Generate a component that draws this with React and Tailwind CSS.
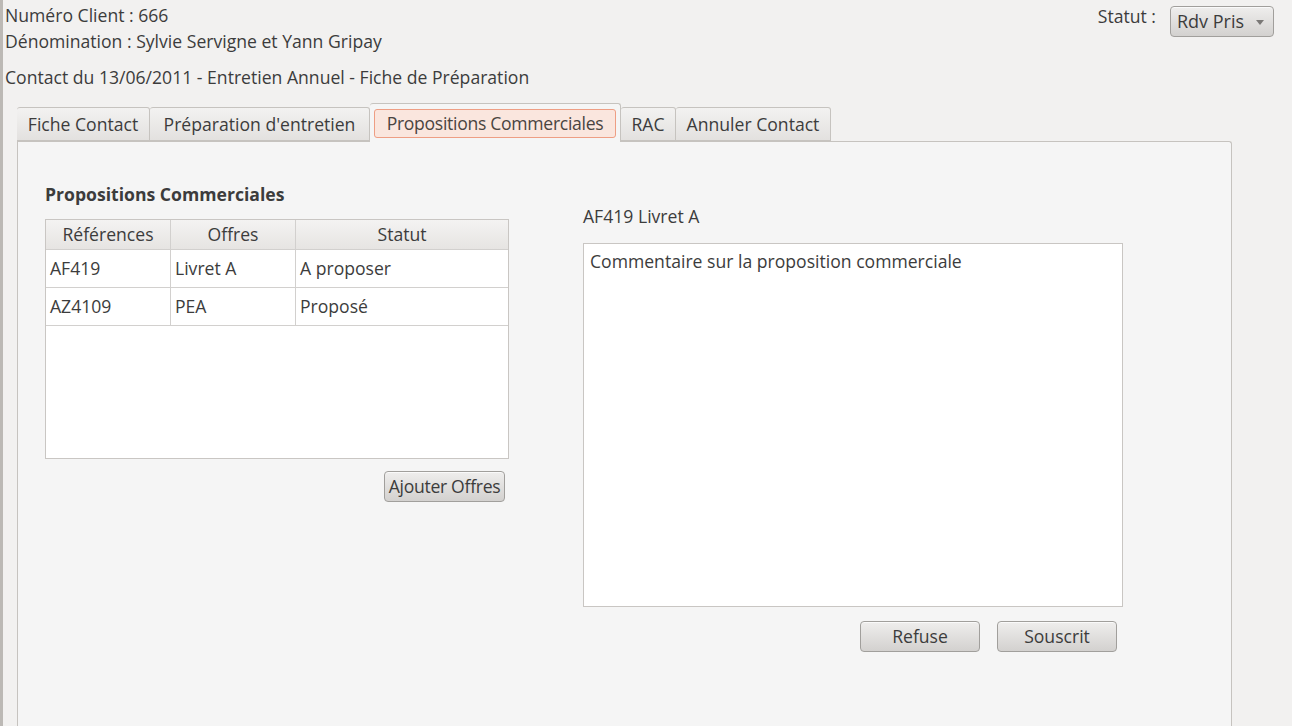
export default function App() {
    const rows = [
        { ref: "AF419", offre: "Livret A", statut: "A proposer" },
        { ref: "AZ4109", offre: "PEA", statut: "Proposé" },
    ];

    const btn =
        "h-[31px] rounded-[4px] border border-[#a19f9c] bg-gradient-to-b from-[#efeeed] to-[#d3d1cf] text-[#3c3c3c] shadow-[inset_0_1px_0_#fafafa]";
    const tab =
        "h-[34px] flex items-center justify-center whitespace-nowrap border border-l-0 border-[#c6c3bf] rounded-t-[3px] bg-gradient-to-b from-[#f3f2f1] to-[#e3e1df] mb-[1px]";

    return (
        <div className="h-[726px] w-[1292px] overflow-hidden bg-[#f2f1f0] border-l-[3px] border-[#bcb9b5] text-[#3c3c3c] font-['Open_Sans',sans-serif] text-[17.6px] flex flex-col">
            {/* header */}
            <div className="flex justify-between pl-[2px] pr-[18px]">
                <div className="flex flex-col pt-[2px]">
                    <p className="leading-[26px]">Numéro Client : 666</p>
                    <p className="leading-[26px]">Dénomination : Sylvie Servigne et Yann Gripay</p>
                    <p className="leading-[26px] mt-[10px]">Contact du 13/06/2011 - Entretien Annuel - Fiche de Préparation</p>
                </div>
                <div className="flex items-start gap-[14px] pt-[4px]">
                    <span className="mt-[-1px]">Statut :</span>
                    <div className={`${btn} w-[104px] flex items-center justify-between pl-[6px] pr-[9px] mt-[2px]`}>
                        <span className="text-[18px]">Rdv Pris</span>
                        <span className="w-0 h-0 border-l-[4px] border-r-[4px] border-t-[5px] border-l-transparent border-r-transparent border-t-[#7a7876] mt-[2px]" />
                    </div>
                </div>
            </div>

            {/* tabs */}
            <div className="flex items-end ml-[14px] mt-[13px] relative z-10">
                <div className={`${tab} w-[133px] border-l`}>Fiche Contact</div>
                <div className={`${tab} w-[220px]`}>Préparation d'entretien</div>
                <div className="h-[39px] w-[251px] px-[4px] pt-[5px] pb-[4px] flex border border-l-0 border-b-0 border-[#c6c3bf] rounded-t-[3px] bg-[#f5f5f5]">
                    <div className="flex-1 flex items-center justify-center whitespace-nowrap rounded-[3px] border border-[#ee9e84] bg-[#fae6de] text-[#4a4441] tracking-[-0.3px]">Propositions Commerciales</div>
                </div>
                <div className={`${tab} w-[55px]`}>RAC</div>
                <div className={`${tab} w-[155px]`}>Annuler Contact</div>
            </div>

            {/* panel */}
            <div className="ml-[14px] w-[1215px] flex-1 mt-[-1px] border border-b-0 border-[#c6c3bf] rounded-tr-[3px] bg-[#f5f5f5] flex pl-[27px] pt-[42px]">
                <div className="w-[464px] flex flex-col">
                    <h2 className="font-bold leading-[20px]">Propositions Commerciales</h2>
                    <div className="mt-[15px] h-[240px] border border-[#c9c6c3] bg-white">
                        <div className="flex h-[30px] border-b border-[#d2d0ce] bg-gradient-to-b from-[#f4f3f2] to-[#e6e4e2]">
                            <div className="w-[125px] flex items-center justify-center border-r border-[#d2d0ce]">Références</div>
                            <div className="w-[125px] flex items-center justify-center border-r border-[#d2d0ce]">Offres</div>
                            <div className="flex-1 flex items-center justify-center">Statut</div>
                        </div>
                        {rows.map((r) => (
                            <div key={r.ref} className="flex h-[38px] border-b border-[#d2d0ce]">
                                <div className="w-[125px] flex items-center px-[4px] border-r border-[#d2d0ce]">{r.ref}</div>
                                <div className="w-[125px] flex items-center px-[4px] border-r border-[#d2d0ce]">{r.offre}</div>
                                <div className="flex-1 flex items-center px-[4px]">{r.statut}</div>
                            </div>
                        ))}
                    </div>
                    <div className="flex justify-end pr-[4px] mt-[12px]">
                        <button className={`${btn} w-[121px] whitespace-nowrap overflow-hidden flex items-center justify-center tracking-[-0.3px]`}>Ajouter Offres</button>
                    </div>
                </div>

                <div className="ml-[74px] w-[540px] flex flex-col pt-[22px]">
                    <p className="leading-[20px]">AF419 Livret A</p>
                    <div className="mt-[17px] h-[364px] border border-[#c9c6c3] bg-white px-[6px] py-[4px]">
                        Commentaire sur la proposition commerciale
                    </div>
                    <div className="flex justify-end gap-[17px] mt-[14px] pr-[6px]">
                        <button className={`${btn} w-[120px]`}>Refuse</button>
                        <button className={`${btn} w-[120px]`}>Souscrit</button>
                    </div>
                </div>
            </div>
        </div>
    );
}
